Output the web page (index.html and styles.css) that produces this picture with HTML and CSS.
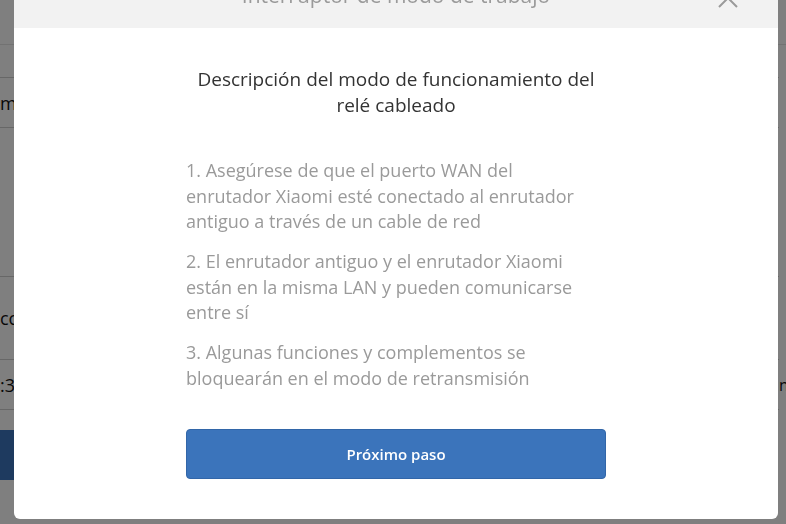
FILE: index.html
```
<!DOCTYPE html>
<html lang="es">
<head>
<meta charset="utf-8">
<title>Interruptor de modo de trabajo</title>
<link rel="stylesheet" href="styles.css">
</head>
<body>
<div class="page">
  <div class="row r1"><span class="cell"></span><span class="cell"></span></div>
  <div class="row r2"><span class="cell"></span><span class="cell"></span></div>
  <div class="row r3"><span class="cell">mación</span><span class="cell"></span></div>
  <div class="row r4"><span class="cell"></span><span class="cell"></span></div>
  <div class="row r5"><span class="cell">cconexión</span><span class="cell"></span></div>
  <div class="row r6"><span class="cell">:30</span><span class="cell side">n</span></div>
  <div class="spacer"></div>
  <div class="bgbtn"></div>
</div>
<div class="overlay"></div>
<div class="modal">
  <div class="modal-head">
    <span class="modal-title">Interruptor de modo de trabajo</span>
    <svg class="close" width="22" height="22" viewBox="0 0 22 22"><path d="M2 2 L20 20 M20 2 L2 20" stroke="#9a9a9a" stroke-width="2" fill="none"/></svg>
  </div>
  <div class="modal-body">
    <h2 class="heading">Descripción del modo de funcionamiento del relé cableado</h2>
    <ol class="steps">
      <li>1. Asegúrese de que el puerto WAN del enrutador Xiaomi esté conectado al enrutador antiguo a través de un cable de red</li>
      <li>2. El enrutador antiguo y el enrutador Xiaomi están en la misma LAN y pueden comunicarse entre sí</li>
      <li>3. Algunas funciones y complementos se bloquearán en el modo de retransmisión</li>
    </ol>
    <button class="next">Próximo paso</button>
  </div>
</div>
</body>
</html>
```
FILE: styles.css
```
html, body {
  margin: 0;
  padding: 0;
  height: 100%;
  overflow: hidden;
  font-family: "Open Sans", "Noto Sans", sans-serif;
  background: #fff;
}
.page {
  display: flex;
  flex-direction: column;
  width: 786px;
}
.row {
  display: grid;
  grid-template-columns: 779px 7px;
  font-size: 18px;
  color: #111;
  white-space: nowrap;
}
.cell {
  display: flex;
  align-items: center;
  overflow: hidden;
  box-sizing: border-box;
  border-bottom: 1px solid #cfcfcf;
}
.row .cell:last-child { border-bottom-color: transparent; }
.r1 .cell, .r1 .cell:last-child { border-bottom-color: #e4e4e4; }
.side { font-size: 16px; }
.r1 { height: 45px; }
.r2 { height: 33px; }
.r3 { height: 50px; }
.r4 { height: 149px; }
.r5 { height: 83px; }
.r6 { height: 50px; }
.spacer { height: 20px; }
.bgbtn { height: 50px; width: 400px; background: #3d74be; }
.overlay {
  position: fixed;
  inset: 0;
  background: rgba(0, 0, 0, 0.5);
}
.modal {
  position: fixed;
  left: 14px;
  top: -32px;
  width: 764px;
  background: #fff;
  border-radius: 6px;
  overflow: hidden;
}
.modal-head {
  height: 60px;
  background: #f2f2f2;
  display: flex;
  align-items: center;
  justify-content: center;
  position: relative;
}
.modal-title {
  font-size: 21px;
  color: #9a9a9a;
  margin-top: -6px;
}
.close {
  position: absolute;
  left: 703px;
  top: 19px;
}
.modal-body {
  display: flex;
  flex-direction: column;
  align-items: center;
  padding: 38px 0 40px;
}
.heading {
  width: 420px;
  margin: 0;
  font-size: 19px;
  font-weight: 400;
  line-height: 26px;
  color: #333;
  text-align: center;
}
.steps {
  list-style: none;
  width: 420px;
  box-sizing: border-box;
  margin: 40px 0 0;
  padding: 0 15px 0 0;
  display: flex;
  flex-direction: column;
  gap: 14.5px;
}
.steps li {
  font-size: 18px;
  line-height: 25.5px;
  color: #9a9a9a;
}
.next {
  margin-top: 38px;
  width: 420px;
  height: 50px;
  border: 1px solid #3266a8;
  border-radius: 4px;
  background: #3b74bb;
  color: #fff;
  font-family: inherit;
  font-size: 15px;
  font-weight: 600;
}
```
